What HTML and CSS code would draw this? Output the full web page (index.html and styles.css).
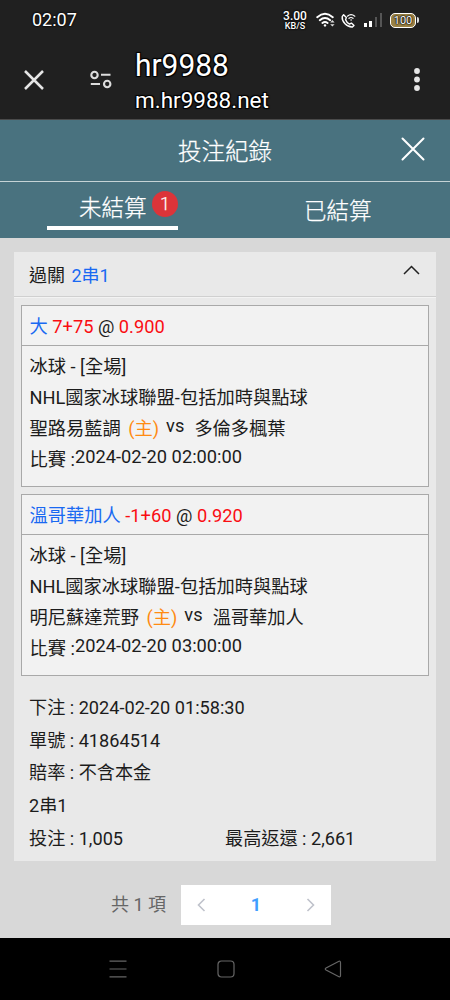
FILE: index.html
```html
<!DOCTYPE html>
<html lang="zh-Hant">
<head>
<meta charset="utf-8">
<meta name="viewport" content="width=device-width, initial-scale=1">
<title>投注紀錄</title>
<link rel="stylesheet" href="styles.css">
</head>
<body>
<div class="phone">
  <header class="browser">
    <div class="status">
      <span class="clock">02:07</span>
      <span class="speed"><b>3.00</b><b class="unit">KB/S</b></span>
      <svg class="wifi" width="20" height="16" viewBox="0 0 20 16" fill="none" stroke="#fff" stroke-width="1.9" stroke-linecap="round"><path d="M1.2 5.2Q9 -1.6 16.8 5.2M3.8 8.2Q9 3.8 14.2 8.2M6.4 11Q9 9 11.6 11"/><circle cx="9" cy="13.4" r="1.2" fill="#fff" stroke="none"/><path d="M14.2 10.4L16.4 8l2.2 2.4zM14.2 12.2l2.2 2.4 2.2-2.4z" fill="#ddd" stroke="none"/></svg>
      <svg class="call" width="15" height="15" viewBox="0 0 15 15" fill="none" stroke="#fff" stroke-width="1.4" stroke-linecap="round" stroke-linejoin="round"><path d="M2.6 1.8L1.2 3.6Q.8 7.4 4 10.8T11.4 14l1.6-1.5-2.6-2.4-1.9 1Q5.6 9.5 4.6 6.7L5.3 4.6z"/><path d="M6.4 3.2Q10 .2 13.8 3.2M8 5.3q2-1.6 4 0" stroke-width="1.2"/><circle cx="10.1" cy="7" r=".8" fill="#fff" stroke="none"/></svg>
      <svg class="signal" width="18" height="15" viewBox="0 0 18 15"><path d="M0 10h3v4H0zM5 8h3v6H5z" fill="#fff"/><path d="M11 4h2v10h-2zM16 0h2v14h-2z" fill="#555"/></svg>
      <span class="battery">100</span>
    </div>
    <div class="address">
      <svg class="exit" width="20" height="20" viewBox="0 0 20 20" stroke="#e6e6e6" stroke-width="2.5" fill="none"><path d="M1 1l18 18M19 1L1 19"/></svg>
      <svg class="tune" width="22" height="19" viewBox="0 0 22 19" stroke="#ddd" stroke-width="2.1" fill="none"><circle cx="4.5" cy="5" r="3.2"/><path d="M11 4.8h9.5M.8 14H10"/><circle cx="17.2" cy="14" r="3.2"/></svg>
      <div class="site"><div class="site-name">hr9988</div><div class="site-url">m.hr9988.net</div></div>
      <svg class="more" width="6" height="23" viewBox="0 0 6 23" fill="#e6e6e6"><circle cx="3" cy="3" r="2.9"/><circle cx="3" cy="11.5" r="2.9"/><circle cx="3" cy="20" r="2.9"/></svg>
    </div>
  </header>

  <div class="titlebar">
    <h1>投注紀錄</h1>
    <svg class="close" width="24" height="24" viewBox="0 0 24 24" stroke="#fff" stroke-width="2" stroke-linecap="round"><path d="M1.5 1.5l21 21M22.5 1.5l-21 21"/></svg>
  </div>
  <nav class="tabs">
    <div class="tab"><div class="tab-inner active">未結算<span class="badge">1</span></div></div>
    <div class="tab settled">已結算</div>
  </nav>

  <main class="content">
    <section class="card">
      <div class="card-head"><span>過關 <span class="blue">2串1</span></span>
        <svg class="chevron" width="17" height="10" viewBox="0 0 17 10" stroke="#222" stroke-width="1.5" fill="none"><path d="M1 9l7.5-7.5L16 9"/></svg>
      </div>
      <div class="bets">
        <article class="bet">
          <div class="bet-title"><span class="blue">大</span> <span class="red">7+75</span> @ <span class="red">0.900</span></div>
          <div class="bet-body">
            <div>冰球 - [全場]</div>
            <div>NHL國家冰球聯盟-包括加時與點球</div>
            <div class="teams"><span>聖路易藍調</span><span class="home">(主)</span><span class="vs">vs</span><span>多倫多楓葉</span></div>
            <div class="time">比賽 :<span>2024-02-20 02:00:00</span></div>
          </div>
        </article>
        <article class="bet">
          <div class="bet-title"><span class="blue">溫哥華加人</span> <span class="red">-1+60</span> @ <span class="red">0.920</span></div>
          <div class="bet-body">
            <div>冰球 - [全場]</div>
            <div>NHL國家冰球聯盟-包括加時與點球</div>
            <div class="teams"><span>明尼蘇達荒野</span><span class="home">(主)</span><span class="vs">vs</span><span>溫哥華加人</span></div>
            <div class="time">比賽 :<span>2024-02-20 03:00:00</span></div>
          </div>
        </article>
      </div>
      <div class="summary">
        <div>下注 : 2024-02-20 01:58:30</div>
        <div>單號 : 41864514</div>
        <div>賠率 : 不含本金</div>
        <div>2串1</div>
        <div class="amounts"><span>投注 : 1,005</span><span>最高返還 : 2,661</span></div>
      </div>
    </section>
    <div class="pagination">
      <span class="total">共 1 項</span>
      <div class="pager">
        <svg width="9" height="14" viewBox="0 0 9 14" stroke="#bfc2cb" stroke-width="1.6" fill="none"><path d="M7.5 1L1.5 7l6 6"/></svg>
        <b>1</b>
        <svg width="9" height="14" viewBox="0 0 9 14" stroke="#bfc2cb" stroke-width="1.6" fill="none"><path d="M1.5 1l6 6-6 6"/></svg>
      </div>
    </div>
  </main>

  <footer class="sysnav">
    <svg width="18" height="18" viewBox="0 0 18 18" stroke="#666" stroke-width="1.2" fill="none"><path d="M.5 1.2h17M.5 9h17M.5 16.8h17"/></svg>
    <svg width="18" height="18" viewBox="0 0 18 18" stroke="#666" stroke-width="1.2" fill="none"><rect x="1" y="1" width="16" height="16" rx="3.5"/></svg>
    <svg width="18" height="18" viewBox="0 0 18 18" stroke="#666" stroke-width="1.2" fill="none" stroke-linejoin="round"><path d="M15 1.3L2 8q-1.5 1 0 2l13 6.7q1.5.5 1.5-1.2v-13Q16.5.8 15 1.3z"/></svg>
  </footer>
</div>
</body>
</html>
```

FILE: styles.css
```css
* { box-sizing: border-box; }
body {
  margin: 0;
  font-family: Roboto, "Noto Sans CJK TC", sans-serif;
  font-size: 18px;
  color: #1c1c1c;
}
svg { display: block; flex: none; }
.phone { width: 450px; height: 1000px; display: flex; flex-direction: column; overflow: hidden; background: #d8d8d8; }

.browser { height: 120px; flex: none; background: #202020; border-bottom: 1px solid #4a4a4a; color: #fff; }
.status { display: flex; align-items: center; height: 40px; padding-left: 32px; text-shadow: 0 0 2px #000, 0 0 2px #000; }
.clock { width: 251px; font-size: 18px; line-height: 40px; }
.speed { display: flex; flex-direction: column; align-items: center; width: 24px; font-weight: 500; }
.speed b { font-size: 12px; line-height: 11px; font-weight: 500; }
.speed .unit { font-size: 9px; line-height: 8px; }
.wifi { margin-left: 9px; }
.call { margin-left: 5px; }
.signal { margin-left: 8px; }
.battery {
  position: relative; width: 26px; height: 15px; margin-left: 8px;
  border: 1.5px solid #fff; border-radius: 5px; background: #9b8244;
  font-size: 11px; line-height: 13px; text-align: center;
  text-shadow: 0 0 1px #000, 0 0 2px #000, 0 0 2px #000;
}
.battery::after { content: ""; position: absolute; right: -4px; top: 3px; width: 2px; height: 6px; background: #ddd; border-radius: 0 2px 2px 0; }
.address { display: flex; align-items: center; height: 79px; padding: 0 30px 0 24px; }
.tune { margin-left: 46px; }
.site { flex: 1; margin-left: 23px; text-shadow: -1px -1px 1px #000, 1px -1px 1px #000, -1px 1px 1px #000, 1px 1px 1px #000; }
.site-name { font-size: 32px; line-height: 38px; transform: scaleX(.935); transform-origin: left; margin-top: 3px; }
.site-url { font-size: 22.5px; line-height: 33px; }

.titlebar { position: relative; display: flex; align-items: center; justify-content: center; height: 62px; flex: none; background: #49727f; border-bottom: 1px solid #c5d3d6; color: #fff; }
.titlebar h1 { margin: 0; font-size: 23.5px; font-weight: 300; line-height: 60px; padding-top: 2px; -webkit-text-stroke: .25px #fff; }
.close { position: absolute; right: 25px; top: 17px; }
.tabs { display: flex; height: 56px; flex: none; background: #49727f; color: #fff; font-size: 22.5px; font-weight: 300; -webkit-text-stroke: .25px #fff; }
.tab { width: 225px; padding-left: 47px; }
.settled { padding-left: 79px; line-height: 59px; }
.tab-inner { position: relative; width: 131px; height: 48px; padding-left: 32px; line-height: 52px; border-bottom: 4px solid #fff; }
.badge { position: absolute; right: 0; top: 9px; width: 26px; height: 26px; border-radius: 50%; background: #dc3439; font-size: 18px; line-height: 25px; text-align: center; font-weight: 300; }

.content { flex: 1; padding: 14px 14px 0; }
.card { height: 609px; background: #e9e9e9; }
.card-head { display: flex; justify-content: space-between; height: 45px; padding: 0 16px 0 15px; line-height: 48px; border-bottom: 1px solid #d0d0d0; }
.card-head .blue { margin-left: 2px; }
.chevron { margin-top: 13px; }
.blue { color: #1969f2; }
.red { color: #fa0d12; }
.bets { display: flex; flex-direction: column; gap: 7px; padding: 7px 7px 0; border-top: 1px solid #f3f3f3; font-size: 18.25px; }
.bet { height: 182px; background: #f2f2f2; border: 1px solid #a9a9a9; }
.bet-title { height: 40px; padding-left: 7.5px; line-height: 41px; border-bottom: 1px solid #a9a9a9; }
.bet-body { padding: 5px 7.5px; line-height: 31px; }
.teams { display: flex; }
.home { margin-left: 7.5px; color: #ff8b12; }
.vs { margin-left: 7px; margin-right: 10px; position: relative; top: -3px; }
.time span { position: relative; top: -3px; }
.summary { padding: 16px 15px 0; font-size: 18.15px; line-height: 32.7px; }
.amounts { display: flex; }
.amounts span:first-child { width: 196px; }

.pagination { display: flex; align-items: center; margin-top: 24px; padding-left: 97px; color: #666; }
.total { width: 70px; margin-top: -4px; }
.pager { display: flex; align-items: center; justify-content: space-between; width: 150px; height: 40px; padding: 0 16px; background: #fff; }
.pager b { color: #409eff; font-weight: 700; margin-top: -2px; }

.sysnav { display: flex; justify-content: space-between; align-items: center; height: 62px; flex: none; padding: 0 108px 0 109px; background: #000; }
```
